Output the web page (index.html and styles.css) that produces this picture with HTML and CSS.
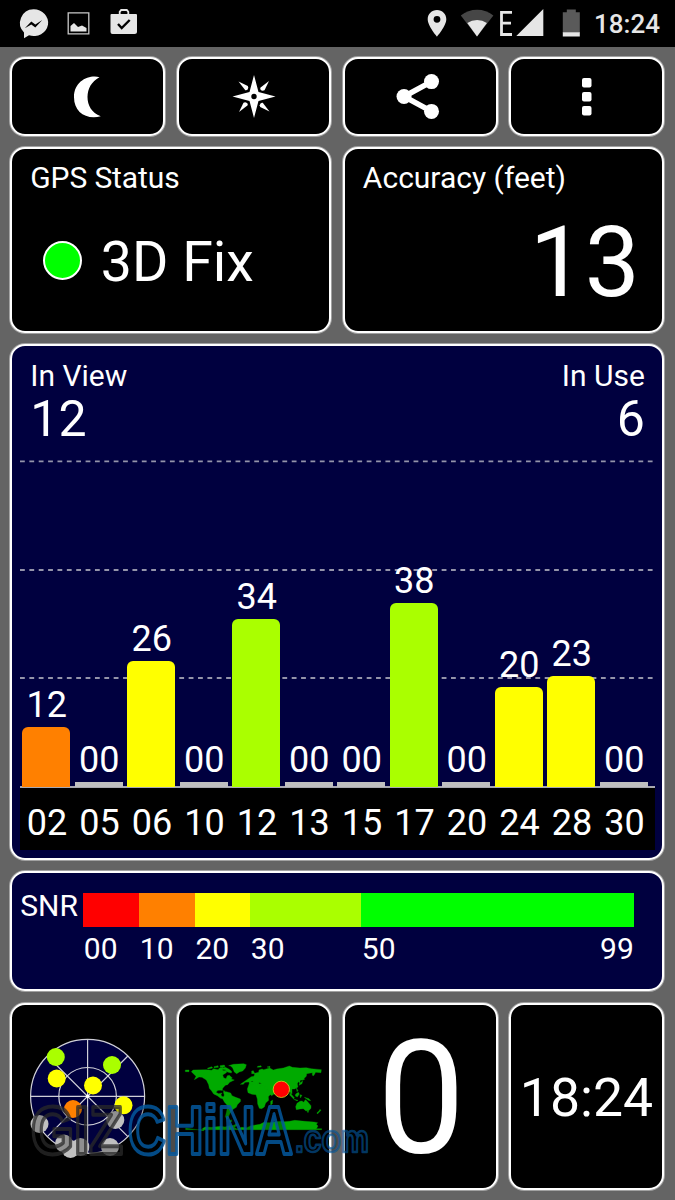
FILE: index.html
```html
<!DOCTYPE html>
<html lang="en">
<head>
<meta charset="utf-8">
<title>GPS Status</title>
<link rel="stylesheet" href="styles.css">
</head>
<body>
<header class="statusbar">
  <svg class="status-left" width="150" height="47" viewBox="0 0 150 47">
    <path fill="#e6e6e6" fill-rule="evenodd" d="M33.500 9.300a14.300 13.400 0 1 1 -4.500 26l-5 3v-5.800a13.600 13.600 0 0 1 9.500-23.200zM24.800 28.200l6.500-6.800 4 3 7-4.300-7 7.500-4-3z"/>
    <path fill="none" stroke="#c9c9c9" stroke-width="1.300" d="M68.200 12.900h20.600v21H68.200z"/>
    <path fill="#e6e6e6" d="M70.500 31.500V26l3.500-3 4 4 4-1.500 4.500 2.500v3.500z"/>
    <path fill="none" stroke="#e6e6e6" stroke-width="1.800" d="M119.700 15v-3.200l1.500-1.800h5.600l1.500 1.800V15"/>
    <path fill="#e6e6e6" d="M111.500 14H136a1 1 0 0 1 1 1v16.500a2.500 2.500 0 0 1-2.500 2.500h-22a2 2 0 0 1-2-2V15a1 1 0 0 1 1-1z"/>
    <path fill="none" stroke="#000" stroke-width="2.400" d="M118 24l3.700 4 8-8"/>
  </svg>
  <div class="status-right">
    <svg width="160" height="47" viewBox="420 0 160 47">
      <path fill="#e6e6e6" fill-rule="evenodd" d="M437 10c-5.300 0-9.300 4-9.300 9.200 0 6.600 9.300 17.400 9.300 17.400s9.300-10.800 9.300-17.400C446.300 14 442.300 10 437 10zm0 5.900a3.400 3.400 0 1 1 0 6.800 3.400 3.400 0 0 1 0-6.800z"/>
      <path fill="#464646" d="M460.800 15.500a26 26 0 0 1 32.600 0L477 36.500z"/>
      <path fill="#e6e6e6" d="M467.300 23a17 17 0 0 1 19.600 0L477 36.500z"/>
      <path fill="none" stroke="#e6e6e6" stroke-width="2.800" d="M512 12.300h-10.500v22.200H512M501.500 23.200h9.500"/>
      <path fill="#e6e6e6" d="M543.300 9v27h-27z"/>
      <path fill="#5a5a5a" d="M562.800 12.300h4V9.500h9v2.800h4V33h-17z"/>
      <path fill="#e6e6e6" d="M562.800 32.300h17v4.200h-17z"/>
    </svg>
    <span class="clock">18:24</span>
  </div>
</header>

<main class="dashboard">
  <section class="card">
    <svg class="tool" width="150" height="75" viewBox="0 0 150 75"><path fill="#fff" d="M87.500 18.200C77 15.500 62 22 62 38.200 62 53 74 61 88.800 57.300 79.500 54 75.500 46 75.500 38c0-8.500 4-15.500 12-19.800z"/></svg>
  </section>
  <section class="card">
    <svg class="tool" width="150" height="75" viewBox="-75 -37.500 150 75"><path fill="#fff" fill-rule="evenodd" d="M0-21.500L4.500-4.500 21.500 0 4.500 4.500 0 21.500-4.500 4.500-21.500 0-4.500-4.500zM0-2.700a2.700 2.700 0 1 0 0 5.400 2.700 2.700 0 0 0 0-5.400z"/><g fill="#fff"><path id="ray" d="M15-15.500L6.300-8.700q-.5 2.500 2.500 3L10.500-6.200z"/><use href="#ray" transform="rotate(90)"/><use href="#ray" transform="rotate(180)"/><use href="#ray" transform="rotate(270)"/></g></svg>
  </section>
  <section class="card">
    <svg class="tool" width="150" height="75" viewBox="0 0 150 75"><path fill="none" stroke="#fff" stroke-width="5.500" d="M86.500 22.600L59 37.500 86.500 52.400"/><g fill="#fff"><circle cx="86.500" cy="22.600" r="7.500"/><circle cx="59" cy="37.500" r="7.500"/><circle cx="86.500" cy="52.400" r="7.500"/></g></svg>
  </section>
  <section class="card">
    <svg class="tool" width="150" height="75" viewBox="0 0 150 75"><g fill="#fff"><rect x="71" y="19" width="9.500" height="9.500" rx="2"/><rect x="71" y="33" width="9.500" height="9.500" rx="2"/><rect x="71" y="47" width="9.500" height="9.500" rx="2"/></g></svg>
  </section>

  <section class="card half">
    <h2 class="title tight">GPS Status</h2>
    <div class="fix"><i class="lamp"></i><span>3D Fix</span></div>
  </section>
  <section class="card half">
    <h2 class="title">Accuracy (feet)</h2>
    <div class="accuracy">13</div>
  </section>

  <section class="card full navy chart">
    <div class="counts">
      <div><h2>In View</h2><b>12</b></div>
      <div class="right"><h2>In Use</h2><b>6</b></div>
    </div>
    <div class="plot">
      <svg class="gridlines" width="635" height="330" viewBox="0 0 635 330"><path fill="none" stroke="#9494aa" stroke-width="1.800" stroke-dasharray="4.800 4.570" d="M0 4.300H634M0 113H634M0 221H634"/></svg>
      <div class="bar orange"><span>12</span><i style="height:60px"></i></div>
      <div class="bar none"><span>00</span><i style="height:5px"></i></div>
      <div class="bar yellow"><span>26</span><i style="height:126px"></i></div>
      <div class="bar none"><span>00</span><i style="height:5px"></i></div>
      <div class="bar lime"><span>34</span><i style="height:168px"></i></div>
      <div class="bar none"><span>00</span><i style="height:5px"></i></div>
      <div class="bar none"><span>00</span><i style="height:5px"></i></div>
      <div class="bar lime"><span>38</span><i style="height:184px"></i></div>
      <div class="bar none"><span>00</span><i style="height:5px"></i></div>
      <div class="bar yellow"><span>20</span><i style="height:100px"></i></div>
      <div class="bar yellow"><span>23</span><i style="height:111px"></i></div>
      <div class="bar none"><span>00</span><i style="height:5px"></i></div>
    </div>
    <div class="ids"><span>02</span><span>05</span><span>06</span><span>10</span><span>12</span><span>13</span><span>15</span><span>17</span><span>20</span><span>24</span><span>28</span><span>30</span></div>
  </section>

  <section class="card full navy snr">
    <span class="snr-name">SNR</span>
    <div class="scale">
      <i class="red"></i><i class="orange"></i><i class="yellow"></i><i class="lime"></i><i class="green"></i>
      <span>00</span><span>10</span><span>20</span><span>30</span><span class="ends"><b>50</b><b>99</b></span>
    </div>
  </section>

  <section class="card">
    <svg class="tile" width="151" height="183" viewBox="12 1005 151 183">
      <circle cx="87.600" cy="1096.300" r="57" fill="#00003f" stroke="#d0d0d8" stroke-width="1.200"/>
      <g fill="none" stroke="#d0d0d8" stroke-width="1.200"><circle cx="87.600" cy="1096.300" r="28.800"/><path d="M30.600 1096.300h114M87.600 1039.300v114M47.300 1056l80.600 80.600M127.900 1056l-80.600 80.600"/></g>
      <circle cx="87.600" cy="1096.300" r="1.800" fill="#fff"/>
      <g fill="#aaff00"><circle cx="55.800" cy="1057" r="9"/><circle cx="112" cy="1065" r="9"/></g>
      <g fill="#ffff00"><circle cx="56.700" cy="1078.500" r="9"/><circle cx="93" cy="1085.500" r="9"/><circle cx="123.500" cy="1105.300" r="9"/></g>
      <circle cx="73" cy="1109" r="9" fill="#ff8000"/>
      <g fill="#c0c0c0"><circle cx="39.500" cy="1124" r="9"/><circle cx="115.300" cy="1120" r="9"/><circle cx="64" cy="1143.500" r="9"/><circle cx="70.500" cy="1149" r="9"/><circle cx="80.500" cy="1147" r="9"/><circle cx="110" cy="1147" r="9"/></g>
    </svg>
  </section>
  <section class="card">
    <svg class="tile" width="151" height="183" viewBox="27 -105 453 549">
      <g fill="#00aa00" stroke="#00aa00" stroke-width="1">
        <path d="M46 90h11v5h-11zM64 95l5-5 40-1 16 2 6-5 13 3 5-5 10-2-2 8 5 2 10-3-3 9-11 7 3 8 7 3 4-9 6-1 9 8-4 3 10 3-14 7-6 7-7 2-8 9-1 5-13 1-6 6 8 4 10-2-3 5 2 5 12 4-2 5-13-3-10-8-11-5-6-9-7-8-2-11-7-14-13-8-9-1-14 8 5-10z"/>
        <path d="M112 85l13-5 3 4-13 3zM132 80l12-3 1 5-13 1zM150 77l13-2 2 5-14 2zM157 84l9-2 10 5 9 7-1 5-12-3-3-6-13-2zM176 77l14-4 31-2 8 3-3 10-8 9-10 3-8 5-7-5-5-12-6-6z"/>
        <path d="M139 145l11 1 7 5-12-2zM158 152l8 1-3 3zM160 157l9-2 13 4 4 8 11 5 14 5 1 7-10 10-3 8-10 6-10 14-3 7-2 7-4 1-4-7 4-17 3-16-10-11-5-10 5-11z"/>
        <path d="M239 127l15-3 9 1 5 6 13-1 6 3 6 15 13 6-1 5-10 11 1 11-9 8-4 12-8 5-7-1-5-13-1-15-4-13-12-1-12-5-2-11z"/>
        <path d="M302 184l6-4-1 12-5 3zM244 110l8-1 2-8-9 0 0-8 5-1 4 8 12-3 1-7 9-3 5 2 18-5 11 6 10-3 20-3 18-6 9 4 23 2 19-1 15 3 30 3-1 9-16-1-6 10-4-1 0-8-17 3-1 8-12 11-6 1-2 8-4-4-3 6 2 10-10 6-8 0 0 15-7-7-6-3-7 7-3 12-5-9-5-9-9-2-8 8-11 8-6-5-7-13-7-2-1-8-13 0-1-5 5-3-5-3-8 1 3 6-5 2-4-7-9-7-4 2 5 8-4 2-8-9-11 1-5 6-9 0z"/>
        <path d="M291 81l9-2v4zM263 79l10-2 1 4-12 1zM389 129l9-6-2 8-9 5zM397 121l2-9 5 6zM360 158l13 15-2 4-12-12zM377 162l8-5 3 5-6 9-6-3zM390 164l6 2-5 8zM403 172l14 4 5 6-7-1zM371 178l13 3-3 1zM379 143l5 9-3 3z"/>
        <path d="M381 190l9-6 6-1 5 4 5-8 4 3 6 7 7 8 0 8-7 7-9 0-7-6-10 1-11 2-2-9zM411 214l5 0-2 4zM441 218l6-5 3-5 3 3-7 7-4 4z"/>
        <path d="M47 264v5h408v-3h-16l5-8-5-5 4-5-11-2-27-2-31-3-15 3-15 1-10-1-16 1-20 3-16-1-12 6-27 4-13 6-15-1-14 5-8-5 9-6-2-6-8 6-15 1-12 4-12-2-28 3-20-1-8 5 5 6zM178 242l6-3 2 5-5 3z"/>
      </g>
      <circle cx="334" cy="148" r="24.500" fill="#f00" stroke="#d8cc20" stroke-width="2.500"/>
    </svg>
  </section>
  <section class="card digit">0</section>
  <section class="card time">18:24</section>
</main>

<svg class="watermark" width="400" height="120" viewBox="10 1070 400 120">
  <g fill="#000" fill-opacity=".25" stroke-linejoin="round" font-family="Liberation Sans" font-weight="700">
    <text x="31" y="1153.500" font-size="68" textLength="92" lengthAdjust="spacingAndGlyphs" stroke="#2a2a2a" stroke-opacity=".75" stroke-width="4">GIZ</text>
    <g stroke="#04579c" stroke-opacity=".85">
      <text x="128" y="1153.500" font-size="69" textLength="165" lengthAdjust="spacingAndGlyphs" stroke-width="4">CHiNA</text>
      <text x="295" y="1151.500" font-size="38" textLength="74" lengthAdjust="spacingAndGlyphs" stroke-width="2.500" stroke-opacity=".65">.com</text>
    </g>
  </g>
</svg>
</body>
</html>
```

FILE: styles.css
```css
* { box-sizing: border-box; }
body {
  margin: 0;
  width: 675px;
  height: 1200px;
  overflow: hidden;
  position: relative;
  background: #646464;
  color: #fff;
  font-family: Roboto, "Liberation Sans", sans-serif;
}
svg { display: block; }
h2, b { font-weight: 400; margin: 0; }
.statusbar {
  height: 47px;
  background: #000;
  display: flex;
  justify-content: space-between;
}
.status-right { display: flex; padding-right: 15px; }
.clock {
  width: 80px;
  color: #e6e6e6;
  font-size: 26px;
  font-weight: 500;
  line-height: 49px;
  text-align: right;
}
.dashboard {
  display: grid;
  grid-template-columns: repeat(4, 156.700px);
  grid-template-rows: 81px 188px 518px 122px 190px;
  column-gap: 9.600px;
  row-gap: 9px;
  padding: 9px 0 0 9.300px;
}
.card {
  margin: 1px;
  background: #000;
  border: 2px solid #fff;
  border-radius: 15px;
  box-shadow: 0 0 0 1px rgba(255, 255, 255, .4);
  overflow: hidden;
}
.card:nth-last-child(-n+4) { margin-top: 2px; }
.half { grid-column: span 2; }
.full { grid-column: span 4; }
.navy { background: #00003f; }
.title {
  padding: 9px 0 0 18px;
  font-size: 30px;
  line-height: 40px;
}
.tight { letter-spacing: -.12px; }
.fix {
  display: flex;
  align-items: center;
  gap: 19px;
  height: 60px;
  margin: 32px 0 0 30.500px;
  font-size: 55.500px;
}
.fix span { padding-top: 4px; }
.lamp {
  width: 39px;
  height: 39px;
  border: 2px solid #fff;
  border-radius: 50%;
  background: #0f0;
}
.accuracy {
  margin-top: 15px;
  padding-right: 22px;
  font-size: 98px;
  line-height: 100px;
  text-align: right;
}
.chart { padding: 0 7px 0 8px; }
.counts {
  display: flex;
  justify-content: space-between;
  height: 111px;
  padding: 15px 10px 0;
}
.counts h2 { font-size: 30px; line-height: 30px; }
.counts b { display: block; font-size: 50px; line-height: 57px; }
.right { text-align: right; }
.plot {
  position: relative;
  display: grid;
  grid-template-columns: repeat(12, 52.500px);
  height: 331px;
  border-bottom: 2px solid #a8a8b0;
}
.gridlines { position: absolute; left: 0; top: 0; }
.bar {
  position: relative;
  display: flex;
  flex-direction: column;
  justify-content: flex-end;
  padding: 0 2.500px 0 2px;
  margin-bottom: -1px;
  font-size: 36px;
  line-height: 36px;
  text-align: center;
}
.bar span { margin-bottom: 4px; padding-left: 1px; }
.bar i { border-radius: 6px 6px 0 0; }
.none i { border-radius: 0; }
.orange i, i.orange { background: #ff8000; }
.yellow i, i.yellow { background: #ff0; }
.lime i, i.lime { background: #af0; }
.none i { background: #c0c0c0; }
.red { background: #f00; }
.green { background: #0f0; }
.ids {
  display: grid;
  grid-template-columns: repeat(12, 52.500px);
  height: 62px;
  padding-left: .5px;
  background: #000;
  font-size: 36px;
  line-height: 71px;
  text-align: center;
}
.snr {
  display: flex;
  padding: 20px 28px 0 8px;
  font-size: 30px;
}
.snr-name { width: 63px; line-height: 26px; }
.scale {
  flex: 1;
  display: grid;
  grid-template-columns: 56px 55.700px 55.300px 111px 1fr;
  grid-template-rows: 34px 44px;
  line-height: 44px;
}
.scale span { padding-left: .5px; }
.ends { display: flex; justify-content: space-between; }
.digit {
  padding-left: 2px;
  font-size: 157px;
  line-height: 187px;
  text-align: center;
}
.time {
  font-size: 53.500px;
  line-height: 185px;
  text-align: center;
}
.watermark { position: absolute; left: 10px; top: 1070px; }
```
